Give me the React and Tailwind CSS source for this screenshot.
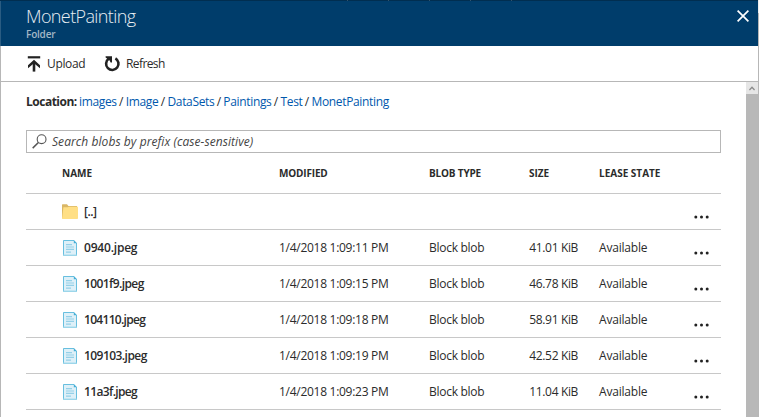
import React from "react";

const rows = [
  { name: "0940.jpeg", track: "tracking-[-0.2px]", modified: "1/4/2018 1:09:11 PM", size: "41.01 KiB" },
  { name: "1001f9.jpeg", track: "tracking-[-0.6px]", modified: "1/4/2018 1:09:15 PM", size: "46.78 KiB" },
  { name: "104110.jpeg", track: "tracking-[-0.7px]", modified: "1/4/2018 1:09:18 PM", size: "58.91 KiB" },
  { name: "109103.jpeg", track: "tracking-[-0.55px]", modified: "1/4/2018 1:09:19 PM", size: "42.52 KiB" },
  { name: "11a3f.jpeg", track: "tracking-[-0.65px]", modified: "1/4/2018 1:09:23 PM", size: "11.04 KiB" },
];

const crumbs = ["images", "Image", "DataSets", "Paintings", "Test", "MonetPainting"];

const grid =
  "grid h-9 shrink-0 grid-cols-[36px_217px_150px_100px_70px_95px_1fr] items-center whitespace-nowrap border-b border-[#c8c8c8]";

function UploadIcon() {
  return (
    <svg width="14" height="16" viewBox="0 0 14 16" fill="none" stroke="#222" strokeWidth="2.6">
      <path d="M.8 1.3h12.4" strokeWidth="2.2" />
      <path d="M7 15.6V6" />
      <path d="M7 3.8L13 9.2V12.2L7 7.2L1 12.2V9.2Z" fill="#222" stroke="none" />
    </svg>
  );
}

function RefreshIcon() {
  return (
    <svg width="17" height="16" viewBox="0 0 17 16">
      <path d="M11.4 2.4A6.2 6.2 0 1 1 4.6 2.8" fill="none" stroke="#222" strokeWidth="2.6" />
      <path d="M1.6 0.2H8V6.6H6.6L5.6 4.4L1.6 1.6Z" fill="#222" />
    </svg>
  );
}

function SearchIcon() {
  return (
    <svg width="15" height="15" viewBox="0 0 15 15" fill="none" stroke="#555">
      <circle cx="9.6" cy="5.2" r="4.4" strokeWidth="1.1" />
      <path d="M6.4 8.5L0.7 14.1" strokeWidth="1.5" />
    </svg>
  );
}

function FolderIcon() {
  return (
    <svg width="16" height="15" viewBox="0 0 16 15">
      <path d="M0 .8Q0 .2.6.2H5L6.4 2H15v12H0Z" fill="#dab766" />
      <path d="M1.4 3.2h4.4L7 2.8h9V14.2q0 .8-.8.8H0Z" fill="#ffdf85" />
    </svg>
  );
}

function FileIcon() {
  return (
    <svg width="14" height="16" viewBox="0 0 14 16">
      <path d="M0 0H11L14 3V16H0Z" fill="#def0f8" />
      <path d="M.5 15V.5H11M13.5 3V15" fill="none" stroke="#68bfdf" />
      <path d="M0 15.3H14" stroke="#9cd6ea" strokeWidth="1.4" />
      <path d="M10.8 0L14 3.2H10.8Z" fill="#45aed6" />
      <path d="M3 4.7h6M3 7h8M3 9.4h8M3 12.2h5" stroke="#94d0e8" strokeWidth="1.2" />
    </svg>
  );
}

function Dots() {
  return (
    <svg className="mt-[10px]" width="15" height="4" viewBox="0 0 15 4" fill="#222">
      <circle cx="1.8" cy="2" r="1.5" />
      <circle cx="7.5" cy="2" r="1.5" />
      <circle cx="13.2" cy="2" r="1.5" />
    </svg>
  );
}

export default function App() {
  return (
    <div className="flex h-[417px] w-[759px] overflow-hidden bg-white font-['Open_Sans','Noto_Sans',sans-serif] text-[12px] text-[#2b2b2b]">
      <div className="flex w-[758px] flex-col">
        <header className="flex h-[46px] shrink-0 flex-col bg-[#003d6b]">
          <div className="flex h-px shrink-0 gap-10 bg-[#012e50] pl-[347px]">
            <i className="w-px bg-[#31526b]" />
            <i className="w-px bg-[#31526b]" />
            <i className="w-px bg-[#31526b]" />
            <i className="w-px bg-[#31526b]" />
            <i className="w-px bg-[#31526b]" />
          </div>
          <div className="flex h-[45px] justify-between border-l border-[#2a5c82] pl-[25px] pr-[9px]">
            <div>
              <h1 className="mt-[3px] h-[24px] text-[18px] leading-[25px] font-light tracking-[-0.62px] text-[#e8eef3]">MonetPainting</h1>
              <p className="text-[10px] leading-[12px] font-semibold tracking-[-0.2px] text-[#a3b7c6]">Folder</p>
            </div>
            <svg className="mt-[9px]" width="12" height="12" viewBox="0 0 12 12" stroke="#fff" strokeWidth="1.7">
              <path d="M.6.6L11.4 11.4M11.4.6L.6 11.4" />
            </svg>
          </div>
        </header>
        <div className="flex min-h-0 flex-1 flex-col border-l border-[#b7b7b7]">
          <div className="flex h-9 shrink-0 items-center border-b border-[#b7b7b7] pl-[26px]">
            <UploadIcon />
            <span className="ml-[6px] w-[38px] tracking-[-0.35px]">Upload</span>
            <span className="ml-[19px]"><RefreshIcon /></span>
            <span className="ml-[5px] tracking-[-0.6px]">Refresh</span>
          </div>
          <div className="flex min-h-0 flex-1">
            <main className="flex w-[745px] flex-col pr-[25px] pl-[25px]">
              <div className="mt-[11px] flex h-[18px] shrink-0 items-center whitespace-nowrap">
                <b className="w-[53px] tracking-[-0.5px]">Location:</b>
                <span className="flex">
                  {crumbs.map((c, i) => (
                    <React.Fragment key={c}>
                      {i > 0 && <span className="w-[9px] text-center">/</span>}
                      <a className="tracking-[-0.34px] text-[#0058ad]">{c}</a>
                    </React.Fragment>
                  ))}
                </span>
              </div>
              <div className="mt-[19px] flex h-[23px] shrink-0 items-center border border-[#b7b7b7] pl-[5px] text-[#444] italic">
                <SearchIcon />
                <span className="ml-[5px] tracking-[0.07px]">Search blobs by prefix (case-sensitive)</span>
              </div>
              <div className="grid h-[41px] shrink-0 grid-cols-[36px_217px_150px_100px_70px_95px_1fr] items-center border-b border-[#c8c8c8] text-[10px] font-bold">
                <span />
                <span>NAME</span>
                <span className="tracking-[-0.17px]">MODIFIED</span>
                <span className="tracking-[-0.17px]">BLOB TYPE</span>
                <span>SIZE</span>
                <span>LEASE STATE</span>
              </div>
              <div className={grid}>
                <span />
                <span className="col-span-5 flex items-center gap-[6px] font-semibold"><FolderIcon /><span className="tracking-[-0.5px]">[..]</span></span>
                <Dots />
              </div>
              {rows.map((r) => (
                <div key={r.name} className={grid}>
                  <span />
                  <span className="flex items-center gap-[7px] pl-px font-semibold"><FileIcon /><span className={r.track}>{r.name}</span></span>
                  <span className="tracking-[-0.28px]">{r.modified}</span>
                  <span className="tracking-[-0.28px]">Block blob</span>
                  <span className="mr-[21px] flex justify-end tracking-[-0.35px]">{r.size}</span>
                  <span className="tracking-[-0.2px]">Available</span>
                  <Dots />
                </div>
              ))}
            </main>
            <div className="flex w-3 flex-col bg-[#b8b8b8]">
              <div className="flex h-3 items-center justify-center bg-[#e6e6e6]">
                <svg width="6" height="5" viewBox="0 0 6 5" fill="none" stroke="#8c8c8c" strokeWidth="1.4">
                  <path d="M.4 4L3 1.3L5.6 4" />
                </svg>
              </div>
            </div>
          </div>
        </div>
      </div>
      <div className="flex w-px flex-col bg-[#b7b7b7]">
        <div className="h-[13px] bg-[#eee]" />
      </div>
    </div>
  );
}
